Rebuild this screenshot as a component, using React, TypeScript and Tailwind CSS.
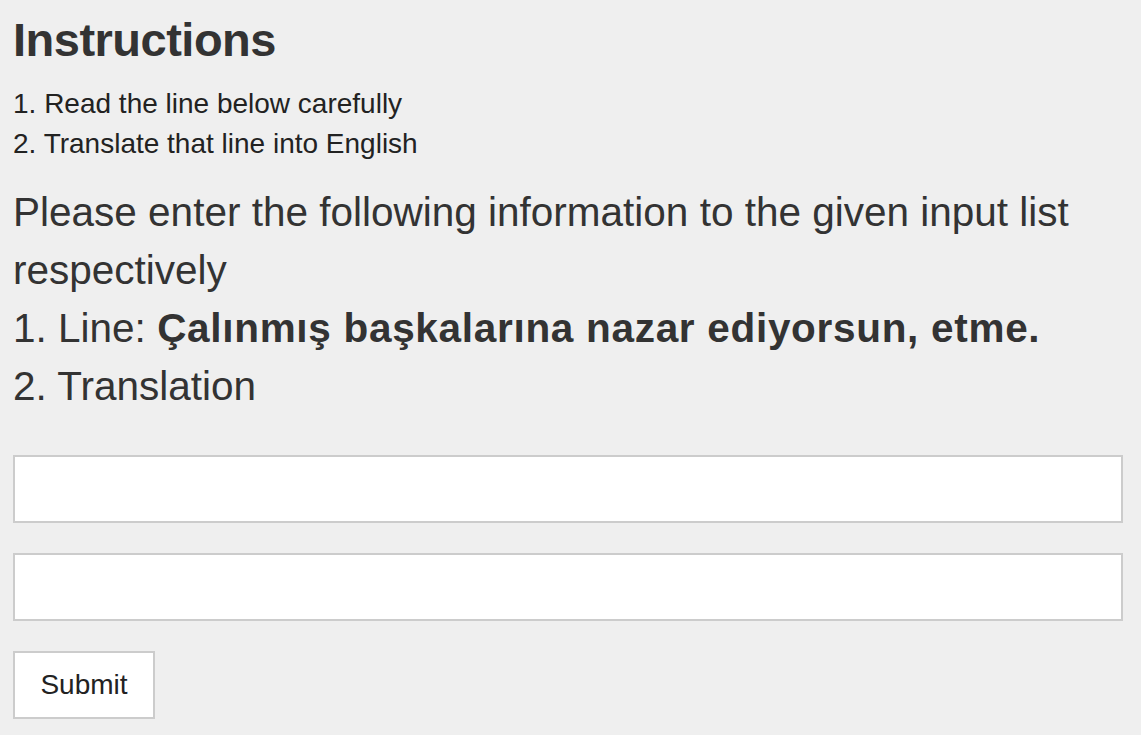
export default function App() {
  return (
    <div
      className="min-h-screen bg-[#efefef] text-[#333] pl-[13px] pr-[18px] pt-[14px]"
      style={{ fontFamily: '"Liberation Sans", Arial, sans-serif' }}
    >
      <h3 className="text-[47px] font-bold leading-[52px] tracking-[-0.5px]">
        Instructions
      </h3>
      <div className="mt-[18px] text-[28px] leading-[40px] text-[#222]">
        <div>1. Read the line below carefully</div>
        <div>2. Translate that line into English</div>
      </div>
      <div className="mt-[19px] text-[40.5px] leading-[58px] text-[#333]">
        <div>
          Please enter the following information to the given input list
          respectively
        </div>
        <div>
          1. Line:{" "}
          <b className="font-bold tracking-[0.7px]">
            Çalınmış başkalarına nazar ediyorsun, etme.
          </b>
        </div>
        <div>2. Translation</div>
      </div>
      <form
        className="mt-[40px] flex flex-col gap-[30px] pb-4"
        onSubmit={(e) => e.preventDefault()}
      >
        <input
          type="text"
          className="block w-full h-[68px] bg-white border-2 border-[#ccc] px-4 text-[28px] outline-none"
        />
        <input
          type="text"
          className="block w-full h-[68px] bg-white border-2 border-[#ccc] px-4 text-[28px] outline-none"
        />
        <div>
          <button
            type="submit"
            className="h-[68px] w-[142px] bg-white border-2 border-[#ccc] text-[28px] text-[#222]"
          >
            Submit
          </button>
        </div>
      </form>
    </div>
  );
}
